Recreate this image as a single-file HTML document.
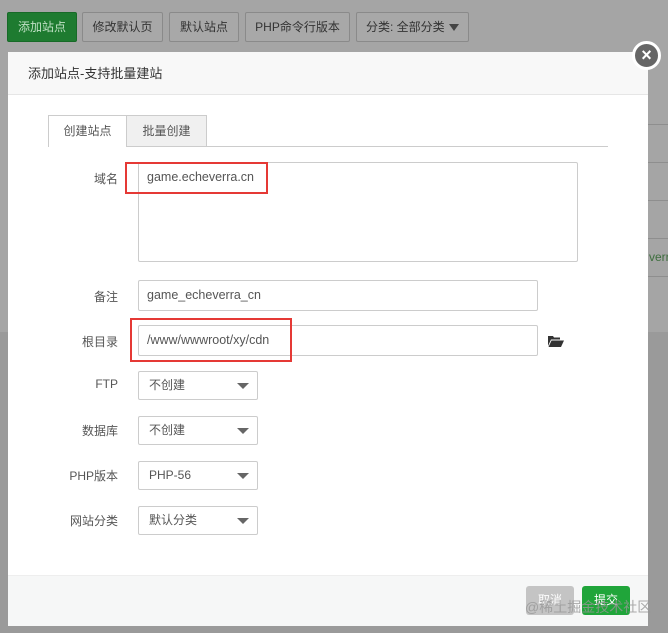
<!DOCTYPE html>
<html><head><meta charset="utf-8"><style>
*{box-sizing:border-box;margin:0;padding:0}
body{width:668px;height:633px;overflow:hidden;background:#9a9a9a;font-family:"Liberation Sans","Noto Sans CJK SC",sans-serif;font-size:12px;color:#555;position:relative}
.a{position:absolute}
.top{left:0;top:0;width:668px;height:332px;background:#a5a5a5}
.btn{position:absolute;top:12px;height:30px;border:1px solid #8a8a8a;background:#a8a8a8;border-radius:2px;color:#333;line-height:28px;text-align:center;font-size:12px}
.line{left:648px;width:20px;height:1px;background:#8e8e8e}
.modal{left:8px;top:52px;width:640px;height:574px;background:#fff}
.hd{position:absolute;left:0;top:0;width:640px;height:43px;background:#f8f8f8;border-bottom:1px solid #e6e6e6;padding-left:20px;line-height:43px;font-size:13px;color:#333}
.lbl{position:absolute;width:110px;text-align:right;color:#555;font-size:12px}
.inp{position:absolute;border:1px solid #ccc;border-radius:2px;background:#fff;padding-left:8px;color:#555;font-size:12.5px}
.sel{position:absolute;left:130px;width:120px;height:29px;border:1px solid #ccc;border-radius:2px;line-height:27px;padding-left:10px;color:#555}
.sel:after{content:"";position:absolute;right:8px;top:11px;border-left:6px solid transparent;border-right:6px solid transparent;border-top:6px solid #666}
.red{position:absolute;border:2px solid #e53935}
</style></head><body>
<div class="a top"></div>
<div class="a line" style="top:124px"></div><div class="a line" style="top:162px"></div><div class="a line" style="top:200px"></div><div class="a line" style="top:238px"></div><div class="a line" style="top:276px"></div>
<div class="a" style="left:649px;top:250px;color:#3d6e3d;font-size:12px">verra</div>
<div class="btn" style="left:7px;width:70px;background:#1e7b30;border-color:#176a27;color:#bfe0c4">添加站点</div>
<div class="btn" style="left:82px;width:81px">修改默认页</div>
<div class="btn" style="left:169px;width:70px">默认站点</div>
<div class="btn" style="left:245px;width:105px">PHP命令行版本</div>
<div class="btn" style="left:356px;width:113px;text-align:left;padding-left:9px">分类: 全部分类<span style="position:absolute;right:9px;top:11px;border-left:5px solid transparent;border-right:5px solid transparent;border-top:7px solid #444"></span></div>
<div class="a modal">
 <div class="hd">添加站点-支持批量建站</div>
 <div class="a" style="left:40px;top:94px;width:560px;height:1px;background:#ccc"></div>
 <div class="a" style="left:40px;top:63px;width:79px;height:32px;background:#fff;border:1px solid #ccc;border-bottom:none;text-align:center;line-height:31px;color:#555">创建站点</div>
 <div class="a" style="left:118px;top:63px;width:81px;height:31px;background:#f0f0f0;border:1px solid #ccc;border-bottom:none;text-align:center;line-height:31px;color:#555">批量创建</div>
 <div class="lbl" style="top:118px">域名</div>
 <div class="inp" style="left:130px;top:110px;width:440px;height:100px;padding-top:7px">game.echeverra.cn</div>
 <div class="red" style="left:117px;top:110px;width:143px;height:32px"></div>
 <div class="lbl" style="top:236px">备注</div>
 <div class="inp" style="left:130px;top:228px;width:400px;height:31px;line-height:29px">game_echeverra_cn</div>
 <div class="lbl" style="top:281px">根目录</div>
 <div class="inp" style="left:130px;top:273px;width:400px;height:31px;line-height:29px">/www/wwwroot/xy/cdn</div>
 <div class="red" style="left:122px;top:266px;width:162px;height:44px"></div>
 <svg class="a" style="left:540px;top:283px" width="16" height="12" viewBox="0 0 16 12"><path d="M0 1h5l1 1.5h6v2H3L0 11z" fill="#333"/><path d="M3.5 5.5H16L13 12H0.5z" fill="#333"/></svg>
 <div class="lbl" style="top:325px">FTP</div><div class="sel" style="top:319px">不创建</div>
 <div class="lbl" style="top:370px">数据库</div><div class="sel" style="top:364px">不创建</div>
 <div class="lbl" style="top:415px">PHP版本</div><div class="sel" style="top:409px">PHP-56</div>
 <div class="lbl" style="top:460px">网站分类</div><div class="sel" style="top:454px">默认分类</div>
 <div class="a" style="left:0;top:523px;width:640px;height:51px;background:#f6f7f7;border-top:1px solid #eee"></div>
 <div class="a" style="left:518px;top:534px;width:48px;height:29px;background:#c4c4c4;border-radius:3px;color:#fff;text-align:center;line-height:29px">取消</div>
 <div class="a" style="left:574px;top:534px;width:48px;height:29px;background:#20a53a;border-radius:3px;color:#fff;text-align:center;line-height:29px">提交</div>
</div>
<div class="a" style="left:525px;top:597px;color:rgba(150,150,150,.8);font-size:14px;white-space:nowrap">@稀土掘金技术社区</div>
<div class="a" style="left:632px;top:41px;width:29px;height:29px;border-radius:50%;background:#666;border:3px solid #fff;color:#fff;text-align:center;line-height:22px;font-size:18px;font-weight:bold">×</div>
</body></html>
